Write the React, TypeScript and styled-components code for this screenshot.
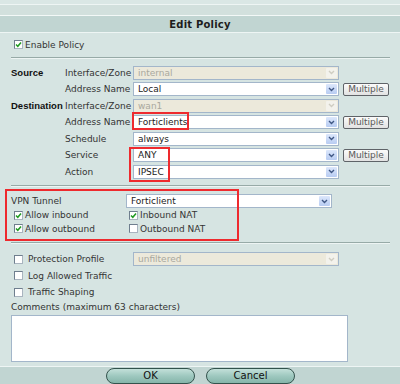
import React from 'react';
import styled, { createGlobalStyle } from 'styled-components';

const GlobalStyle = createGlobalStyle`
  html, body {
    margin: 0;
    padding: 0;
    background: #d6e4e2;
  }
  body {
    font-family: "DejaVu Sans", Verdana, sans-serif;
    font-size: 9px;
    color: #353535;
  }
`;

const Page = styled.div`
  position: relative;
  width: 400px;
  height: 384px;
  overflow: hidden;
  background: #d6e4e2;
`;

const TopBand = styled.div`
  height: 15px;
  background: linear-gradient(to bottom, #dae7e5 0 4px, #eef5f4 4px 5px, #d2e0dd 5px 15px);
  border-bottom: 1px solid #f3f8f7;
`;

const Header = styled.div`
  height: 16px;
  background: #c1d5d2;
  border-bottom: 1px solid #eef5f4;
  display: flex;
  align-items: center;
  justify-content: center;
  font-weight: bold;
  font-size: 10px;
  color: #1d1d1d;
  letter-spacing: 0.2px;
`;

const Content = styled.div`
  padding: 0 10px 0 11px;
`;

const Divider = styled.div<{ $top: number; $bottom: number }>`
  margin: ${(p) => p.$top}px 0 ${(p) => p.$bottom}px 0;
  border-top: 1px solid #97aaa7;
  border-bottom: 1px solid #edf4f3;
`;

const CheckRow = styled.label<{ $h?: number }>`
  display: flex;
  align-items: center;
  height: ${(p) => p.$h ?? 14}px;
  gap: 2px;
  white-space: nowrap;
`;

const Box = styled.span`
  display: inline-flex;
  align-items: center;
  justify-content: center;
  width: 9px;
  height: 9px;
  box-sizing: border-box;
  border: 1px solid #6f7e8e;
  border-right-color: #a9b4bf;
  border-bottom-color: #a9b4bf;
  background: #ffffff;
  flex: none;
  margin-left: 3px;
`;

const Check = ({ on }: { on: boolean }) => (
  <Box>
    {on && (
      <svg width="7" height="7" viewBox="0 0 7 7">
        <path d="M1 3.5 L2.8 5.3 L6 1.5" fill="none" stroke="#1f9a22" strokeWidth="1.5" />
      </svg>
    )}
  </Box>
);

const FormGrid = styled.div`
  display: grid;
  grid-template-columns: 54px 68px 206px 46px;
  grid-auto-rows: 16.5px;
  align-items: center;
  margin-top: 5.5px;
`;

const SectionLabel = styled.span`
  font-family: "Liberation Sans", Arial, sans-serif;
  font-size: 9.5px;
  font-weight: bold;
  color: #111;
  white-space: nowrap;
`;

const FieldLabel = styled.span`
  color: #333;
  white-space: nowrap;
`;

const SelectBox = styled.div<{ $disabled?: boolean; $width: number }>`
  width: ${(p) => p.$width}px;
  height: 14px;
  box-sizing: border-box;
  border: 1px solid #a3b6ca;
  background: ${(p) => (p.$disabled ? '#ece9db' : '#ffffff')};
  color: ${(p) => (p.$disabled ? '#a9a89e' : '#222')};
  display: flex;
  align-items: center;
  justify-content: space-between;
  padding: 0 1px 0 4px;
`;

const Arrow = styled.span<{ $disabled?: boolean }>`
  width: 11px;
  height: 10px;
  display: inline-flex;
  align-items: center;
  justify-content: center;
  background: ${(p) =>
    p.$disabled ? '#f3f2ec' : 'linear-gradient(to bottom, #dce7fb, #b8ccf2)'};
  border-radius: 1px;
`;

const Select = ({ value, disabled, width = 206 }: { value: string; disabled?: boolean; width?: number }) => (
  <SelectBox $disabled={disabled} $width={width}>
    <span>{value}</span>
    <Arrow $disabled={disabled}>
      <svg width="7" height="5" viewBox="0 0 7 5">
        <path d="M1 1 L3.5 3.5 L6 1" fill="none" stroke={disabled ? '#cfcdc2' : '#3f5784'} strokeWidth="1.4" />
      </svg>
    </Arrow>
  </SelectBox>
);

const MultipleButton = styled.button`
  width: 46px;
  height: 13px;
  margin-left: 4px;
  padding: 0;
  box-sizing: border-box;
  border: 1px solid #5f6368;
  border-radius: 2px;
  background: linear-gradient(to bottom, #fbfbfb, #e2e2e2);
  font-family: "DejaVu Sans", Verdana, sans-serif;
  font-size: 9px;
  color: #5a5a5a;
  line-height: 11px;
`;

const VpnSection = styled.div`
  display: grid;
  grid-template-columns: 115px 1fr;
  grid-auto-rows: 13.5px;
  align-items: center;
`;

const VpnLabelRow = styled.div`
  grid-column: 1 / -1;
  display: grid;
  grid-template-columns: 115px 1fr;
  align-items: center;
  height: 15px;
  margin-bottom: 1px;
`;

const OptionsList = styled.div`
  display: flex;
  flex-direction: column;
`;

const OptionRow = styled.div`
  display: grid;
  grid-template-columns: 122px 1fr;
  align-items: center;
  height: 16.5px;
`;

const OptionText = styled.span`
  margin-left: 3px;
`;

const CommentsLabel = styled.div`
  margin-top: -1px;
  height: 14px;
  display: flex;
  align-items: center;
  color: #333;
`;

const CommentsArea = styled.div`
  width: 337px;
  height: 47px;
  box-sizing: border-box;
  border: 1px solid #a3b6ca;
  background: #fff;
  margin-top: 1px;
`;

const Footer = styled.div`
  position: absolute;
  left: 0;
  right: 0;
  top: 366px;
  bottom: 0;
  background: #c1d5d2;
  border-top: 1px solid #eef5f4;
  display: flex;
  justify-content: center;
  align-items: flex-start;
  gap: 11px;
  padding-top: 1px;
  padding-left: 1px;
`;

const PillButton = styled.button`
  width: 89px;
  height: 16px;
  box-sizing: border-box;
  border: 1px solid #33524c;
  border-radius: 8px;
  background: linear-gradient(to bottom, #c3e0d9 0%, #9ec8bf 50%, #86b5aa 100%);
  font-family: "DejaVu Sans", Verdana, sans-serif;
  font-size: 10px;
  color: #111;
  padding: 0;
  line-height: 14px;
`;

const Annotation = styled.div<{ $x: number; $y: number; $w: number; $h: number }>`
  position: absolute;
  left: ${(p) => p.$x}px;
  top: ${(p) => p.$y}px;
  width: ${(p) => p.$w}px;
  height: ${(p) => p.$h}px;
  box-sizing: border-box;
  border: 2px solid #ee2a2e;
  pointer-events: none;
`;

export default function App() {
  return (
    <Page>
      <GlobalStyle />
      <TopBand />
      <Header>Edit Policy</Header>
      <Content>
        <CheckRow $h={11} style={{ marginTop: 6 }}>
          <Check on />
          <span>Enable Policy</span>
        </CheckRow>
        <Divider $top={7} $bottom={0} />
        <FormGrid>
          <SectionLabel>Source</SectionLabel>
          <FieldLabel>Interface/Zone</FieldLabel>
          <Select value="internal" disabled />
          <span />

          <span />
          <FieldLabel>Address Name</FieldLabel>
          <Select value="Local" />
          <MultipleButton>Multiple</MultipleButton>

          <SectionLabel>Destination</SectionLabel>
          <FieldLabel>Interface/Zone</FieldLabel>
          <Select value="wan1" disabled />
          <span />

          <span />
          <FieldLabel>Address Name</FieldLabel>
          <Select value="Forticlients" />
          <MultipleButton>Multiple</MultipleButton>

          <span />
          <FieldLabel>Schedule</FieldLabel>
          <Select value="always" />
          <span />

          <span />
          <FieldLabel>Service</FieldLabel>
          <Select value="ANY" />
          <MultipleButton>Multiple</MultipleButton>

          <span />
          <FieldLabel>Action</FieldLabel>
          <Select value="IPSEC" />
          <span />
        </FormGrid>
        <Divider $top={5} $bottom={8} />
        <VpnSection>
          <VpnLabelRow>
            <FieldLabel>VPN Tunnel</FieldLabel>
            <Select value="Forticlient" />
          </VpnLabelRow>
          <CheckRow>
            <Check on />
            <span>Allow inbound</span>
          </CheckRow>
          <CheckRow>
            <Check on />
            <span>Inbound NAT</span>
          </CheckRow>
          <CheckRow>
            <Check on />
            <span>Allow outbound</span>
          </CheckRow>
          <CheckRow>
            <Check on={false} />
            <span>Outbound NAT</span>
          </CheckRow>
        </VpnSection>
        <Divider $top={6} $bottom={7.5} />
        <OptionsList>
          <OptionRow>
            <CheckRow>
              <Check on={false} />
              <OptionText>Protection Profile</OptionText>
            </CheckRow>
            <Select value="unfiltered" disabled />
          </OptionRow>
          <OptionRow>
            <CheckRow>
              <Check on={false} />
              <OptionText>Log Allowed Traffic</OptionText>
            </CheckRow>
          </OptionRow>
          <OptionRow>
            <CheckRow>
              <Check on={false} />
              <OptionText>Traffic Shaping</OptionText>
            </CheckRow>
          </OptionRow>
        </OptionsList>
        <CommentsLabel>Comments (maximum 63 characters)</CommentsLabel>
        <CommentsArea />
      </Content>
      <Footer>
        <PillButton>OK</PillButton>
        <PillButton>Cancel</PillButton>
      </Footer>
      <Annotation $x={132} $y={112} $w={57} $h={18} />
      <Annotation $x={129} $y={147} $w={41} $h={35} />
      <Annotation $x={5} $y={189} $w={234} $h={52} />
    </Page>
  );
}
